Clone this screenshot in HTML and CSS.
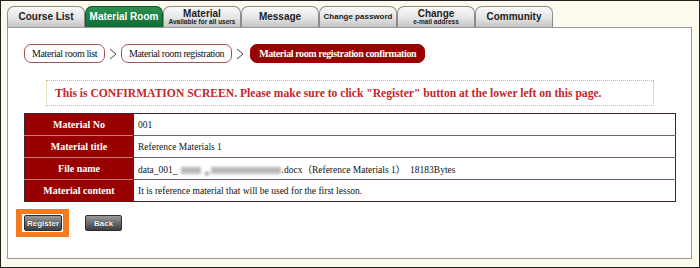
FILE: index.html
```html
<!DOCTYPE html>
<html lang="en">
<head>
    <meta charset="UTF-8">
    <title>Material room registration confirmation</title>
    <link rel="stylesheet" href="styles.css">
</head>
<body>
    <div class="frame">
        <ul class="tabs">
            <li class="tab">Course List</li>
            <li class="tab active">Material Room</li>
            <li class="tab two-line">Material<span>Available for all users</span></li>
            <li class="tab">Message</li>
            <li class="tab small">Change password</li>
            <li class="tab two-line">Change<span>e-mail address</span></li>
            <li class="tab">Community</li>
        </ul>

        <div class="panel">
            <div class="breadcrumb">
                <span class="crumb">Material room list</span>
                <svg class="chevron" viewBox="0 0 8 12"><polyline points="1,1 7,6 1,11" /></svg>
                <span class="crumb">Material room registration</span>
                <svg class="chevron" viewBox="0 0 8 12"><polyline points="1,1 7,6 1,11" /></svg>
                <span class="crumb current">Material room registration confirmation</span>
            </div>

            <p class="notice">This is CONFIRMATION SCREEN. Please make sure to click "Register" button at the lower left on this page.</p>

            <table class="detail">
                <tr>
                    <th>Material No</th>
                    <td>001</td>
                </tr>
                <tr>
                    <th>Material title</th>
                    <td>Reference Materials 1</td>
                </tr>
                <tr>
                    <th>File name</th>
                    <td>data_001_<span class="blur short"></span><span class="blur under"></span><span class="blur long"></span>.docx（Reference Materials 1）　18183Bytes</td>
                </tr>
                <tr>
                    <th>Material content</th>
                    <td>It is reference material that will be used for the first lesson.</td>
                </tr>
            </table>

            <div class="actions">
                <span class="highlight"><button class="btn">Register</button></span>
                <button class="btn">Back</button>
            </div>
        </div>
    </div>
</body>
</html>
```

FILE: styles.css
```css
* {
    margin: 0;
    padding: 0;
    box-sizing: border-box;
}

body {
    font-family: 'Liberation Serif', 'Noto Sans CJK JP', serif;
    background-color: #ffffff;
}

.frame {
    width: 700px;
    height: 268px;
    border: 1px solid #222222;
    background-color: #fcf9ed;
    padding: 5px 6px 0 6px;
}

/* Top navigation tabs */
.tabs {
    list-style: none;
    display: flex;
    height: 21px;
}

.tab {
    width: 78px;
    height: 21px;
    display: flex;
    flex-direction: column;
    justify-content: center;
    align-items: center;
    font-family: 'Liberation Sans', Arial, sans-serif;
    font-weight: bold;
    font-size: 10px;
    color: #222222;
    background: linear-gradient(#fafafa, #e4e4e4 55%, #c4c4c4);
    border: 1px solid #8c8c8c;
    border-bottom: none;
    border-radius: 7px 7px 0 0;
    line-height: 1;
}

.tab.active {
    background: linear-gradient(#2a9150, #0f6b33);
    border-color: #0c5a2a;
    color: #ffffff;
}

.tab.small {
    font-size: 8px;
    color: #1a1a1a;
}

.tab.two-line {
    font-size: 10px;
    line-height: 9px;
}

.tab.two-line span {
    font-size: 6.5px;
    line-height: 8px;
}

/* Main panel */
.panel {
    height: 232px;
    background-color: #ffffff;
    border: 1px solid #9a9a9a;
    padding: 16px 16px 0 16px;
    margin-right: 1px;
}

.breadcrumb {
    display: flex;
    align-items: center;
    height: 19px;
}

.crumb {
    display: inline-flex;
    align-items: center;
    height: 19px;
    padding: 0 7px;
    font-size: 10px;
    letter-spacing: -0.4px;
    color: #111111;
    border: 1px solid #9c5656;
    border-radius: 7px;
    background-color: #ffffff;
}

.crumb.current {
    background-color: #990000;
    border-color: #990000;
    color: #ffffff;
    font-weight: bold;
    padding: 0 8px;
    margin-left: 2px;
}

.chevron {
    width: 8px;
    height: 12px;
    margin: 0 4px;
}

.chevron polyline {
    fill: none;
    stroke: #444444;
    stroke-width: 1;
}

.notice {
    margin: 17px 0 0 22px;
    width: 608px;
    height: 26px;
    border: 1px dotted #cfc070;
    padding-left: 8px;
    display: flex;
    align-items: center;
    font-size: 11.6px;
    font-weight: bold;
    color: #c1272d;
}

/* Detail table */
.detail {
    margin-top: 7px;
    width: 652px;
    border-collapse: collapse;
    border: 1px solid #3c2424;
    font-size: 9.5px;
}

.detail tr {
    height: 22px;
}

.detail th {
    width: 109px;
    background-color: #990000;
    color: #ffffff;
    font-size: 10px;
    font-weight: bold;
    text-align: center;
    border-top: 1px solid #c77a7a;
    border-right: 1px solid #5a2020;
}

.detail td {
    padding-left: 4px;
    color: #111111;
    border-top: 1px solid #7a6262;
}

.detail tr:first-child th,
.detail tr:first-child td {
    border-top: none;
}

.blur {
    display: inline-block;
    height: 7px;
    background-color: #b8b8b8;
    filter: blur(1.5px);
    vertical-align: middle;
}

.blur.short {
    width: 20px;
    margin-left: 3px;
}

.blur.under {
    width: 4px;
    height: 3px;
    margin: 6px 2px 0 4px;
    background-color: #888888;
}

.blur.long {
    width: 70px;
    margin-right: 1px;
}

/* Buttons */
.actions {
    display: flex;
    align-items: center;
    gap: 16px;
    margin-top: 7px;
}

.highlight {
    display: inline-flex;
    border-style: solid;
    border-color: #f47b20;
    border-width: 5px 6px 5px 6px;
    padding: 1px 1px 1px 2px;
    margin-left: -8px;
}

.btn {
    height: 16px;
    min-width: 37px;
    padding: 0 2px;
    font-family: 'Liberation Sans', Arial, sans-serif;
    font-size: 8px;
    font-weight: bold;
    color: #ffffff;
    background: linear-gradient(#9a9a9a, #6a6a6a 50%, #3e3e3e);
    border: 1px solid #2e2e2e;
    border-radius: 2px;
    text-shadow: 0 0 1px #000000;
}
```
